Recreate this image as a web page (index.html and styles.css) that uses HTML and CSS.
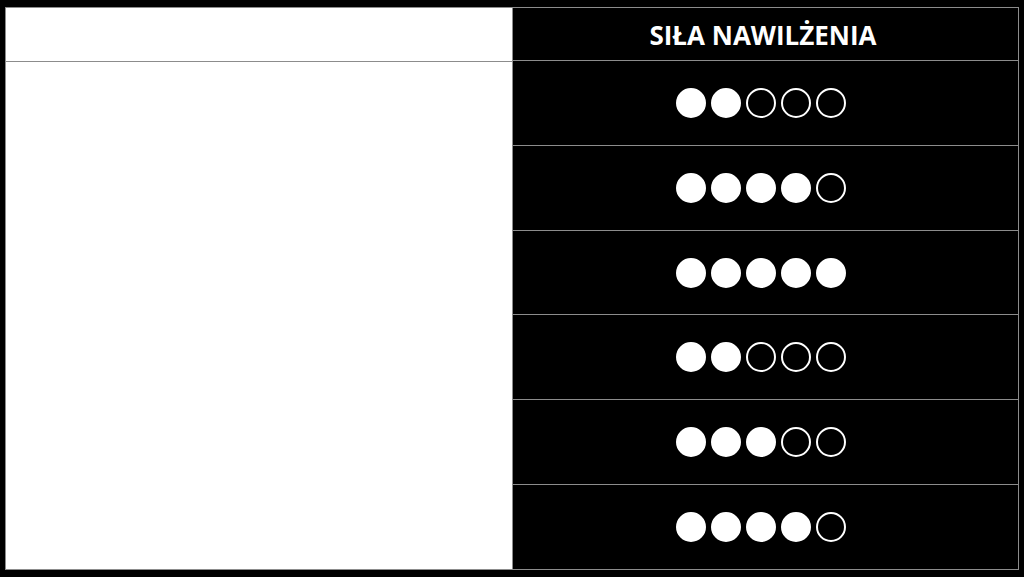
FILE: index.html
```html
<!DOCTYPE html>
<html lang="pl">
<head>
<meta charset="utf-8">
<title>Siła nawilżenia</title>
<link rel="stylesheet" href="styles.css">
</head>
<body>
<div class="table">
  <div class="col col-left">
    <div class="head head-left"></div>
    <div class="body-left"></div>
  </div>
  <div class="col col-right">
    <div class="head head-right">SIŁA NAWILŻENIA</div>
    <div class="row"><span class="dot on"></span><span class="dot on"></span><span class="dot"></span><span class="dot"></span><span class="dot"></span></div>
    <div class="row"><span class="dot on"></span><span class="dot on"></span><span class="dot on"></span><span class="dot on"></span><span class="dot"></span></div>
    <div class="row"><span class="dot on"></span><span class="dot on"></span><span class="dot on"></span><span class="dot on"></span><span class="dot on"></span></div>
    <div class="row"><span class="dot on"></span><span class="dot on"></span><span class="dot"></span><span class="dot"></span><span class="dot"></span></div>
    <div class="row"><span class="dot on"></span><span class="dot on"></span><span class="dot on"></span><span class="dot"></span><span class="dot"></span></div>
    <div class="row"><span class="dot on"></span><span class="dot on"></span><span class="dot on"></span><span class="dot on"></span><span class="dot"></span></div>
  </div>
</div>
</body>
</html>
```
FILE: styles.css
```css
html, body {
  margin: 0;
  padding: 0;
  background: #000;
  width: 1024px;
  height: 577px;
  overflow: hidden;
}
body {
  padding: 7px 0 0 5px;
  box-sizing: border-box;
  font-family: "Open Sans", "Liberation Sans", sans-serif;
}
.table {
  width: 1014px;
  height: 563px;
  box-sizing: border-box;
  border: 1px solid #8c8c8c;
  display: grid;
  grid-template-columns: 507px 1fr;
}
.col {
  display: flex;
  flex-direction: column;
  min-height: 0;
}
.col-left {
  background: #fff;
  border-right: 1px solid #8c8c8c;
}
.head {
  height: 53px;
  flex: none;
  border-bottom: 1px solid #8c8c8c;
}
.head-left {
  background: #fff;
}
.body-left {
  flex: 1;
  background: #fff;
}
.col-right {
  background: #000;
}
.head-right {
  color: #fff;
  font-weight: 700;
  font-size: 26px;
  display: flex;
  align-items: center;
  justify-content: center;
  padding-right: 5px;
  padding-top: 2px;
  box-sizing: border-box;
  letter-spacing: 0;
}
.row {
  flex: 1;
  display: flex;
  align-items: center;
  justify-content: center;
  gap: 5px;
  padding-right: 9px;
}
.row + .row {
  border-top: 1px solid #8c8c8c;
}
.dot {
  width: 30px;
  height: 30px;
  border-radius: 50%;
  box-sizing: border-box;
  border: 2px solid #fff;
  background: transparent;
}
.dot.on {
  background: #fff;
}
```
